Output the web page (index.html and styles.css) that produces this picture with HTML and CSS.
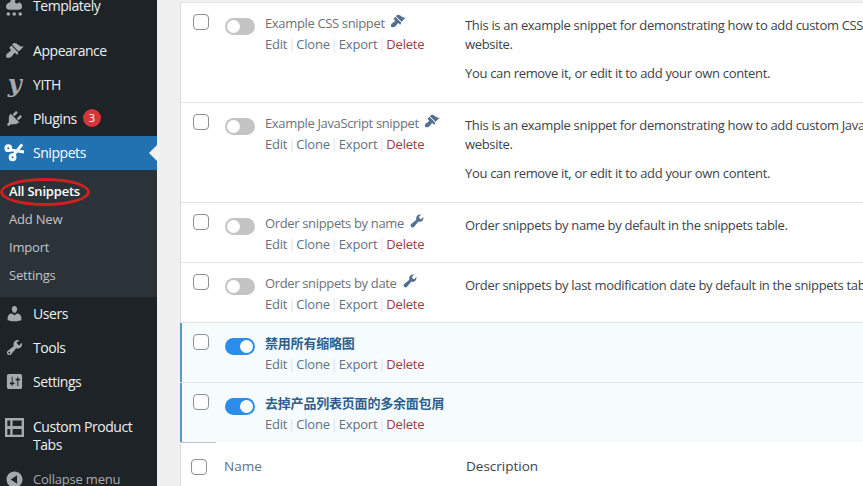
FILE: index.html
```html
<!DOCTYPE html>
<html lang="en">
<head>
    <meta charset="UTF-8">
    <meta name="viewport" content="width=device-width, initial-scale=1.0">
    <title>Snippets</title>
    <link rel="stylesheet" href="styles.css">
</head>
<body>
    <div class="page">
        <!-- Admin menu -->
        <nav class="sidebar">
            <div class="menu-item">
                <svg class="menu-icon templately" viewBox="0 0 20 20"><path d="M1 11.500C1 8.800 3 6.800 5.500 6.500 6 3.500 8 1.500 10.500 1.500c.8 0 1.500.2 2 .5-1 1-1.700 2.200-2 3.700-.2 1.500.8 2.300 2.500 2.300 1-.3 1.500-.8 2-1.500 1.800.8 3 2.400 3 4.500 0 2.200-1.800 3.500-4 3.500H5c-2.400 0-4-1.300-4-3.500z"/><circle cx="3.500" cy="19" r="1.900"/><circle cx="9.700" cy="19" r="1.900"/><circle cx="16" cy="19" r="1.900"/></svg>
                <span>Templately</span>
            </div>
            <div class="menu-gap"></div>
            <div class="menu-item">
                <svg class="menu-icon" viewBox="0 0 20 20"><path d="M14.480 11.060L7.410 3.990l1.500-1.500c.5-.56 2.300-.47 3.510.32 1.210.8 1.430 1.280 2.910 2.100 1.180.64 2.450 1.260 4.450.85zm-.71.71L6.700 4.700 4.930 6.470c-.39.39-.39 1.020 0 1.410l1.060 1.060c.39.39.39 1.030 0 1.420-.6.6-1.430 1.110-2.210 1.690-.35.26-.7.53-1.010.84C1.430 13.230.91 15.080 1.500 17.500c2.420.59 4.270.07 5.610-1.270.31-.31.58-.66.84-1.010.58-.78 1.090-1.610 1.690-2.210.39-.39 1.030-.39 1.420 0l1.060 1.060c.39.39 1.020.39 1.410 0z"/></svg>
                <span>Appearance</span>
            </div>
            <div class="menu-item">
                <span class="menu-icon yith-icon">y</span>
                <span>YITH</span>
            </div>
            <div class="menu-item">
                <svg class="menu-icon" viewBox="0 0 20 20"><path d="M13.110 4.360L9.870 7.600 8 5.730l3.240-3.240c.35-.34 1.050-.2 1.560.32.52.51.66 1.210.31 1.550zm-8 1.770l.91-1.120 9.010 9.010-1.190.84c-.71.71-2.630 1.160-3.820 1.160H6.140L4.900 17.260c-.59.59-1.540.59-2.120 0-.59-.58-.59-1.530 0-2.120l1.240-1.240v-3.880c0-1.130.4-3.190 1.090-3.890zm7.260 3.970l3.240-3.240c.34-.35 1.040-.21 1.550.31.52.51.66 1.210.31 1.550l-3.240 3.250z"/></svg>
                <span>Plugins</span>
                <span class="count">3</span>
            </div>
            <div class="menu-item active">
                <svg class="menu-icon scissors" viewBox="0 0 20 20"><circle cx="3.500" cy="5.500" r="2.600"/><circle cx="8" cy="15" r="2.600"/><path d="M5.800 7.200L20 9.500M9.200 12.500L18 1.500"/></svg>
                <span>Snippets</span>
            </div>
            <div class="submenu">
                <div class="sub-item current">All Snippets</div>
                <div class="sub-item">Add New</div>
                <div class="sub-item">Import</div>
                <div class="sub-item">Settings</div>
            </div>
            <div class="menu-item">
                <svg class="menu-icon" viewBox="0 0 20 20"><path d="M10 9.250c-2.270 0-2.730-3.440-2.730-3.440C7 4.020 7.820 2 9.970 2c2.160 0 2.980 2.020 2.710 3.810 0 0-.41 3.440-2.680 3.440zm0 2.570L12.720 10c2.390 0 4.520 2.330 4.520 4.530v2.490s-3.650 1.130-7.240 1.130c-3.650 0-7.240-1.130-7.240-1.130v-2.490c0-2.250 1.940-4.480 4.470-4.480z"/></svg>
                <span>Users</span>
            </div>
            <div class="menu-item">
                <svg class="menu-icon" viewBox="0 0 20 20"><path d="M16.680 9.770c-1.340 1.340-3.300 1.670-4.950.99l-5.410 6.520c-.99.99-2.590.99-3.580 0s-.99-2.590 0-3.580l6.520-5.410c-.68-1.650-.35-3.610.99-4.950 1.280-1.280 3.120-1.620 4.720-1.060l-2.890 2.890 2.820 2.820 2.860-2.870c.53 1.580.18 3.390-1.080 4.690zM3.810 16.210c.4.39 1.040.39 1.430 0 .4-.4.4-1.040 0-1.430-.39-.4-1.030-.4-1.430 0-.39.39-.39 1.030 0 1.430z"/></svg>
                <span>Tools</span>
            </div>
            <div class="menu-item">
                <svg class="menu-icon" viewBox="0 0 20 20"><path d="M18 16V4c0-1.100-.9-2-2-2H4c-1.100 0-2 .9-2 2v12c0 1.100.9 2 2 2h12c1.100 0 2-.9 2-2zM8 11h1c.55 0 1 .45 1 1s-.45 1-1 1H8v1.500c0 .28-.22.5-.5.5s-.5-.22-.5-.5V13H6c-.55 0-1-.45-1-1s.45-1 1-1h1V5.500c0-.28.22-.5.5-.5s.5.22.5.5V11zm5-2h-1c-.55 0-1-.45-1-1s.45-1 1-1h1V5.500c0-.28.22-.5.5-.5s.5.22.5.5V7h1c.55 0 1 .45 1 1s-.45 1-1 1h-1v5.500c0 .28-.22.5-.5.5s-.5-.22-.5-.5V9z"/></svg>
                <span>Settings</span>
            </div>
            <div class="menu-gap"></div>
            <div class="menu-item tall">
                <svg class="menu-icon" viewBox="0 0 20 20"><path fill-rule="evenodd" d="M0 0h20v20H0zM2.500 2.500v6h3v-6zM8 2.500v6h9.500v-6zM2.500 11.500v6h3v-6zM8 11.500v6h9.500v-6z"/></svg>
                <span>Custom Product Tabs</span>
            </div>
            <div class="menu-item collapse">
                <svg class="menu-icon" viewBox="0 0 20 20"><path d="M10 .6c5.200 0 9.400 4.200 9.400 9.400s-4.200 9.400-9.400 9.400S.6 15.200.6 10 4.800.6 10 .6zm3 14.400V5L5.500 10z"/></svg>
                <span>Collapse menu</span>
            </div>
            <div class="annotation"></div>
        </nav>

        <!-- Snippets table -->
        <main class="content">
            <div class="table">
                <div class="row tall-row">
                    <div class="cell-check"><span class="checkbox"></span></div>
                    <div class="cell-toggle"><span class="toggle"></span></div>
                    <div class="cell-name">
                        <div class="snippet-name">Example CSS snippet
                            <svg class="type-icon" viewBox="0 0 20 20"><path d="M14.480 11.060L7.410 3.990l1.500-1.500c.5-.56 2.300-.47 3.510.32 1.210.8 1.430 1.280 2.910 2.100 1.180.64 2.450 1.260 4.450.85zm-.71.71L6.700 4.700 4.930 6.470c-.39.39-.39 1.020 0 1.410l1.060 1.060c.39.39.39 1.030 0 1.420-.6.6-1.430 1.110-2.210 1.690-.35.26-.7.53-1.010.84C1.430 13.230.91 15.080 1.500 17.500c2.420.59 4.270.07 5.610-1.270.31-.31.58-.66.84-1.010.58-.78 1.090-1.610 1.690-2.210.39-.39 1.030-.39 1.420 0l1.060 1.060c.39.39 1.020.39 1.410 0z"/></svg>
                        </div>
                        <div class="actions"><span>Edit</span><i>|</i><span>Clone</span><i>|</i><span>Export</span><i>|</i><span class="delete">Delete</span></div>
                    </div>
                    <div class="cell-desc">
                        <p>This is an example snippet for demonstrating how to add custom CSS code to your website.</p>
                        <p>You can remove it, or edit it to add your own content.</p>
                    </div>
                </div>
                <div class="row tall-row">
                    <div class="cell-check"><span class="checkbox"></span></div>
                    <div class="cell-toggle"><span class="toggle"></span></div>
                    <div class="cell-name">
                        <div class="snippet-name">Example JavaScript snippet
                            <svg class="type-icon" viewBox="0 0 20 20"><path d="M14.480 11.060L7.410 3.990l1.500-1.500c.5-.56 2.300-.47 3.510.32 1.210.8 1.430 1.280 2.910 2.100 1.180.64 2.450 1.260 4.450.85zm-.71.71L6.700 4.700 4.930 6.470c-.39.39-.39 1.020 0 1.410l1.060 1.060c.39.39.39 1.030 0 1.420-.6.6-1.430 1.110-2.210 1.690-.35.26-.7.53-1.010.84C1.430 13.230.91 15.080 1.500 17.500c2.420.59 4.270.07 5.610-1.270.31-.31.58-.66.84-1.010.58-.78 1.090-1.610 1.690-2.210.39-.39 1.030-.39 1.420 0l1.060 1.060c.39.39 1.020.39 1.410 0z"/></svg>
                        </div>
                        <div class="actions"><span>Edit</span><i>|</i><span>Clone</span><i>|</i><span>Export</span><i>|</i><span class="delete">Delete</span></div>
                    </div>
                    <div class="cell-desc">
                        <p>This is an example snippet for demonstrating how to add custom JavaScript code to your website.</p>
                        <p>You can remove it, or edit it to add your own content.</p>
                    </div>
                </div>
                <div class="row">
                    <div class="cell-check"><span class="checkbox"></span></div>
                    <div class="cell-toggle"><span class="toggle"></span></div>
                    <div class="cell-name">
                        <div class="snippet-name">Order snippets by name
                            <svg class="type-icon" viewBox="0 0 20 20"><path d="M16.680 9.770c-1.340 1.340-3.300 1.670-4.950.99l-5.410 6.520c-.99.99-2.590.99-3.580 0s-.99-2.590 0-3.580l6.520-5.410c-.68-1.650-.35-3.610.99-4.950 1.280-1.280 3.120-1.620 4.720-1.060l-2.890 2.890 2.820 2.820 2.860-2.870c.53 1.580.18 3.390-1.080 4.690z"/></svg>
                        </div>
                        <div class="actions"><span>Edit</span><i>|</i><span>Clone</span><i>|</i><span>Export</span><i>|</i><span class="delete">Delete</span></div>
                    </div>
                    <div class="cell-desc"><p>Order snippets by name by default in the snippets table.</p></div>
                </div>
                <div class="row">
                    <div class="cell-check"><span class="checkbox"></span></div>
                    <div class="cell-toggle"><span class="toggle"></span></div>
                    <div class="cell-name">
                        <div class="snippet-name">Order snippets by date
                            <svg class="type-icon" viewBox="0 0 20 20"><path d="M16.680 9.770c-1.340 1.340-3.300 1.670-4.950.99l-5.410 6.520c-.99.99-2.590.99-3.580 0s-.99-2.590 0-3.580l6.520-5.410c-.68-1.650-.35-3.610.99-4.950 1.280-1.280 3.120-1.620 4.720-1.060l-2.890 2.890 2.820 2.820 2.860-2.870c.53 1.580.18 3.390-1.080 4.690z"/></svg>
                        </div>
                        <div class="actions"><span>Edit</span><i>|</i><span>Clone</span><i>|</i><span>Export</span><i>|</i><span class="delete">Delete</span></div>
                    </div>
                    <div class="cell-desc"><p>Order snippets by last modification date by default in the snippets table.</p></div>
                </div>
                <div class="row on">
                    <div class="cell-check"><span class="checkbox"></span></div>
                    <div class="cell-toggle"><span class="toggle"></span></div>
                    <div class="cell-name">
                        <div class="snippet-name">禁用所有缩略图</div>
                        <div class="actions"><span>Edit</span><i>|</i><span>Clone</span><i>|</i><span>Export</span><i>|</i><span class="delete">Delete</span></div>
                    </div>
                    <div class="cell-desc"></div>
                </div>
                <div class="row on">
                    <div class="cell-check"><span class="checkbox"></span></div>
                    <div class="cell-toggle"><span class="toggle"></span></div>
                    <div class="cell-name">
                        <div class="snippet-name">去掉产品列表页面的多余面包屑</div>
                        <div class="actions"><span>Edit</span><i>|</i><span>Clone</span><i>|</i><span>Export</span><i>|</i><span class="delete">Delete</span></div>
                    </div>
                    <div class="cell-desc"></div>
                </div>
                <div class="table-foot">
                    <div class="foot-check"><span class="checkbox"></span></div>
                    <div class="foot-name">Name</div>
                    <div class="foot-desc">Description</div>
                </div>
            </div>
        </main>
    </div>
</body>
</html>
```

FILE: styles.css
```css
* {
    box-sizing: border-box;
    margin: 0;
    padding: 0;
}

body {
    background-color: #f0f0f1;
    font-family: 'Open Sans', 'Noto Sans CJK SC', sans-serif;
    font-size: 13px;
    overflow: hidden;
}

.page {
    display: flex;
    height: 486px;
    overflow: hidden;
}

/* Admin menu */
.sidebar {
    position: relative;
    flex: 0 0 157px;
    margin-top: -11px;
    background-color: #1d2327;
    color: #f0f0f1;
    font-size: 14px;
}

.menu-item {
    display: flex;
    align-items: center;
    height: 34px;
    padding: 0 0 2px 5px;
    gap: 9px;
    letter-spacing: -0.45px;
}

.menu-item.tall {
    align-items: flex-start;
    height: 52px;
    padding: 8px 0 0 5px;
    line-height: 18px;
}

.menu-gap {
    height: 11px;
}

.menu-icon {
    flex: 0 0 19px;
    width: 19px;
    height: 19px;
    fill: #a7aaad;
}

.templately {
    overflow: visible;
}

.yith-icon {
    color: #a7aaad;
    font-family: 'DejaVu Serif', serif;
    font-size: 24px;
    font-weight: bold;
    font-style: italic;
    line-height: 17px;
    text-align: center;
}

.count {
    width: 18px;
    height: 18px;
    margin-left: -3px;
    border-radius: 50%;
    background-color: #d63638;
    color: #fff;
    font-size: 11px;
    line-height: 18px;
    letter-spacing: 0;
    text-align: center;
}

.menu-item.active {
    position: relative;
    background-color: #2271b1;
    color: #fff;
}

.menu-item.active::after {
    content: '';
    position: absolute;
    right: 0;
    top: 9px;
    border: 8px solid transparent;
    border-right-color: #f0f0f1;
}

.scissors {
    fill: none;
    stroke: #fff;
    stroke-width: 3;
    overflow: visible;
}

.submenu {
    height: 127px;
    padding: 7px 0;
    background-color: #2c3338;
}

.sub-item {
    height: 28px;
    padding-left: 9px;
    color: #c3c4c7;
    font-size: 13px;
    line-height: 28px;
    letter-spacing: -0.2px;
}

.sub-item.current {
    color: #fff;
    font-weight: 600;
}

.collapse {
    padding-bottom: 0;
    color: #a7aaad;
    font-size: 13px;
    letter-spacing: -0.2px;
}

.collapse .menu-icon {
    flex: 0 0 17px;
    width: 17px;
    height: 17px;
    margin: 0 1px;
}

.annotation {
    position: absolute;
    left: 0;
    top: 189px;
    width: 90px;
    height: 28px;
    border: 3px solid #d3201f;
    border-radius: 50%;
}

/* Snippets table */
.content {
    flex: 1;
    min-width: 0;
    padding: 2px 0 0 23px;
}

.table {
    width: 1000px;
    height: 100%;
    background-color: #fff;
    border-left: 1px solid #dcdcde;
}

.row {
    display: flex;
    height: 60px;
    border-top: 1px solid #e2e4e7;
    background-color: #fff;
}

.tall-row {
    height: 100px;
}

.row.on {
    margin-left: -1px;
    padding-left: 1px;
    background-color: #f6fbfe;
    box-shadow: inset 2px 0 0 #4f9cc8;
}

.cell-check {
    flex: 0 0 44px;
    padding: 11px 0 0 12px;
}

.checkbox {
    display: block;
    width: 16px;
    height: 16px;
    border: 1px solid #8c8f94;
    border-radius: 4px;
    background-color: #fff;
}

.cell-toggle {
    flex: 0 0 40px;
    padding-top: 15px;
}

.toggle {
    position: relative;
    display: block;
    width: 30px;
    height: 17px;
    border-radius: 9px;
    background-color: #c4c4c4;
}

.toggle::after {
    content: '';
    position: absolute;
    left: 2px;
    top: 2px;
    width: 13px;
    height: 13px;
    border-radius: 50%;
    background-color: #fff;
}

.on .toggle {
    background-color: #2a8ceb;
}

.on .toggle::after {
    left: 15px;
}

.cell-name {
    flex: 0 0 200px;
    padding-top: 10px;
    letter-spacing: -0.35px;
}

.snippet-name {
    display: flex;
    align-items: center;
    gap: 5px;
    height: 20px;
    color: #6c7278;
    white-space: nowrap;
}

.on .snippet-name {
    padding-bottom: 2px;
    color: #2c5f8e;
    font-weight: 600;
    letter-spacing: -0.2px;
}

.type-icon {
    width: 16px;
    height: 16px;
    margin-top: -4px;
    fill: #51708f;
}

.actions {
    display: flex;
    gap: 1px;
    margin-top: 1px;
    color: #5f7286;
    letter-spacing: -0.2px;
    line-height: 20px;
}

.actions i {
    color: #dfe2e6;
    font-style: normal;
}

.delete {
    color: #9c3a46;
}

.cell-desc {
    width: 520px;
    padding-top: 13px;
    color: #3c434a;
    line-height: 19px;
    letter-spacing: -0.32px;
}

.cell-desc p {
    margin-bottom: 10px;
}

.table-foot {
    display: flex;
    align-items: center;
    height: 46px;
    padding-top: 2px;
    background-color: #fff;
    font-size: 13.5px;
}

.foot-check {
    display: flex;
    align-items: center;
    align-self: stretch;
    flex: 0 0 35px;
    margin-top: -2px;
    padding: 2px 0 0 10px;
    border-top: 1px solid #c3c4c7;
}

.foot-name {
    flex: 0 0 250px;
    padding-left: 8px;
    color: #5f7286;
}

.foot-desc {
    color: #3c434a;
}
```
